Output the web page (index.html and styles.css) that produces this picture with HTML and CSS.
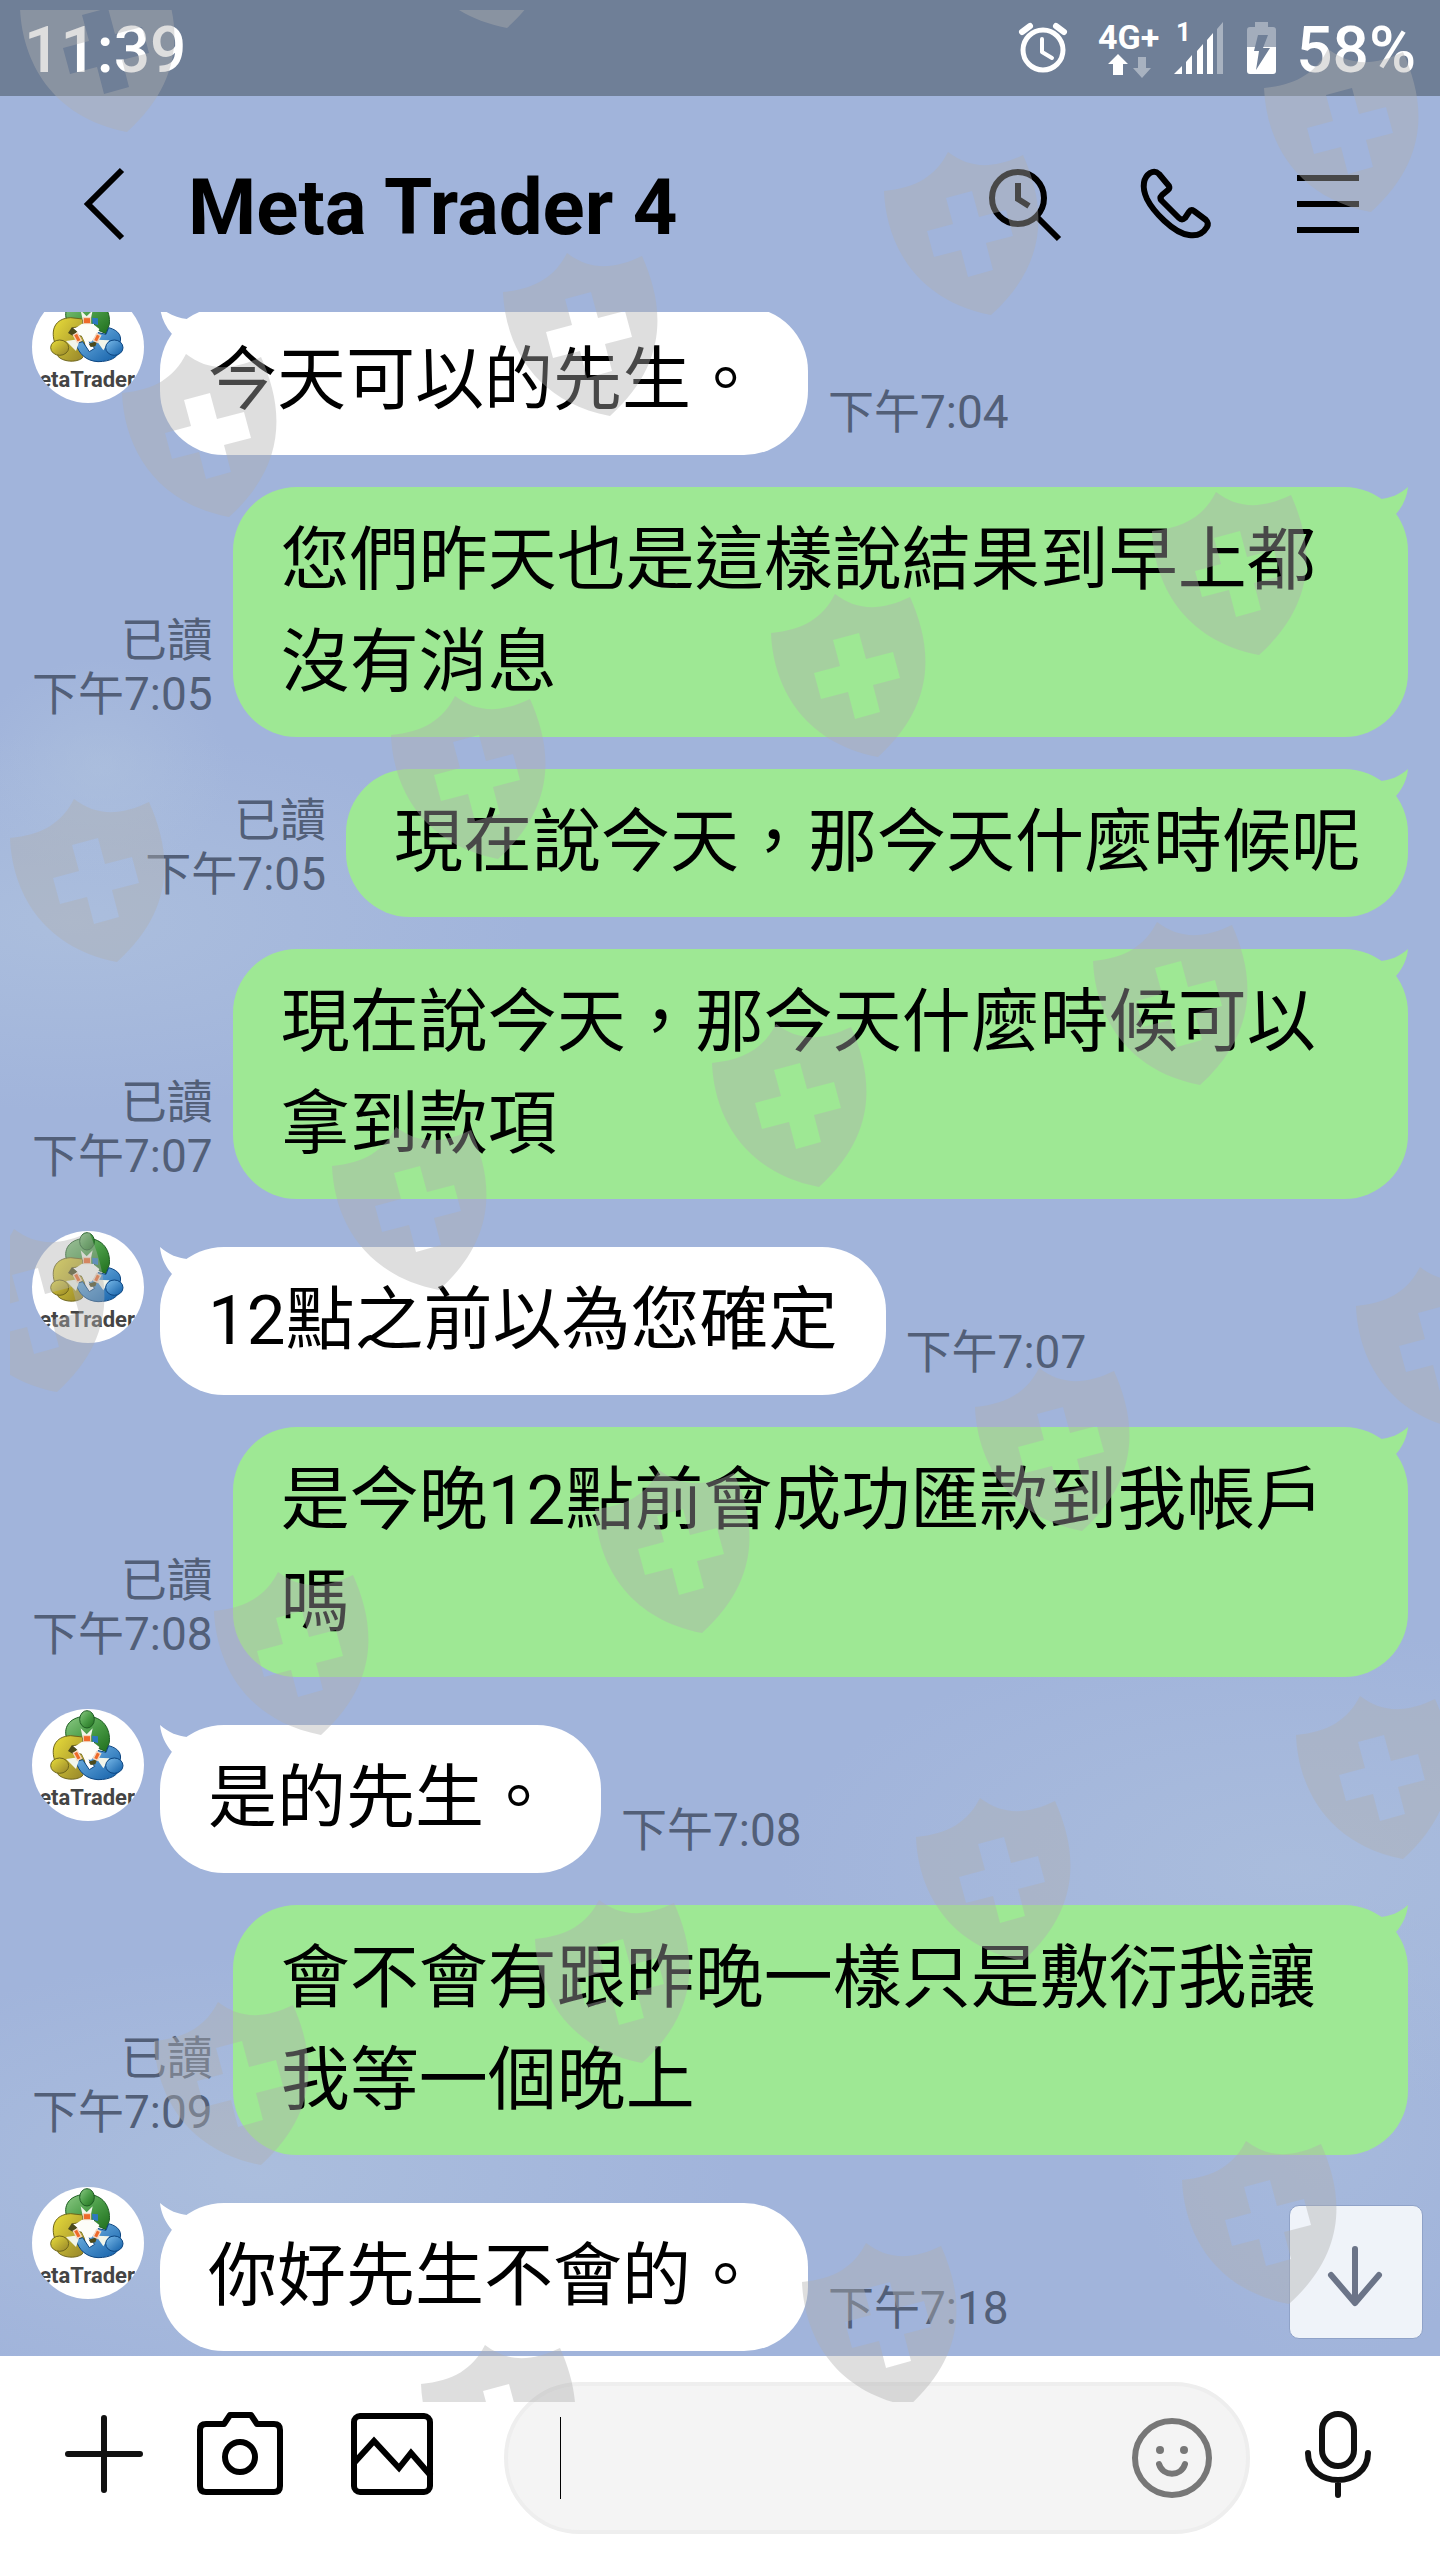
FILE: index.html
```html
<!DOCTYPE html>
<html lang="zh-Hant">
<head>
<meta charset="utf-8">
<meta name="viewport" content="width=device-width, initial-scale=1">
<title>Meta Trader 4</title>
<link rel="stylesheet" href="styles.css">
</head>
<body>
<svg class="defs" aria-hidden="true">
  <defs>
    <linearGradient id="g-green" x1="0" y1="0" x2="1" y2="1"><stop offset="0" stop-color="#8cc985"/><stop offset=".5" stop-color="#4b9d48"/><stop offset="1" stop-color="#1f6e1c"/></linearGradient>
    <linearGradient id="g-yellow" x1="0" y1="0" x2="1" y2="1"><stop offset="0" stop-color="#eade3a"/><stop offset="1" stop-color="#94832a"/></linearGradient>
    <linearGradient id="g-blue" x1="0" y1="0" x2="1" y2="1"><stop offset="0" stop-color="#7cbcea"/><stop offset="1" stop-color="#0f5ca6"/></linearGradient>
    <symbol id="logo" viewBox="0 0 336 336">
      <rect width="336" height="336" fill="#fff"/>
      <g stroke-width="3" stroke-linejoin="round">
        <path d="M104 88C92 50 118 22 164 22C214 22 236 60 232 100L222 128L186 112L190 84L176 108H146L130 84Z" fill="url(#g-green)" stroke="#1d5c22"/>
        <path d="M70 160C54 118 68 82 116 80L152 84V106L122 110L116 128L150 136C164 160 160 188 150 202C130 216 92 212 78 196Z" fill="url(#g-yellow)" stroke="#6f661c"/>
        <path d="M262 160C272 138 262 118 230 110L222 130L186 122C170 126 166 146 172 154L188 172L172 182L152 152L132 158C140 188 162 210 198 212C236 212 256 198 260 184Z" fill="url(#g-blue)" stroke="#0c4580"/>
      </g>
      <path d="M108 126L120 108L136 122L122 134ZM170 158L196 150L190 166L176 168Z" fill="#4b4a1c"/>
      <path d="M132 110L150 98H182L202 114L196 128L178 152H158L142 120Z" fill="#fdfdf8"/>
      <path d="M146 58L164 76L182 58L176 86H152ZM102 150L144 144L132 180ZM192 146L232 148L214 178Z" fill="#f1f5ea"/>
      <path d="M154 80H176V98H154Z" fill="#ee6a2a" stroke="#f6d8c0" stroke-width="3"/>
      <path d="M180 80L198 82V102L182 98Z" fill="#2c78bf"/>
      <path d="M124 132L136 126L148 148L136 154ZM184 148L194 128L206 134L196 154Z" fill="#ee6a2a" stroke="#f6d8c0" stroke-width="4"/>
      <g stroke-width="3">
        <ellipse cx="165" cy="31" rx="22" ry="26" fill="url(#g-green)" stroke="#1d5c22"/>
        <ellipse cx="83" cy="170" rx="27" ry="23" fill="url(#g-yellow)" stroke="#6f661c"/>
        <ellipse cx="247" cy="170" rx="26" ry="23" fill="url(#g-blue)" stroke="#0c4580"/>
      </g>
      <text class="logo-text" x="309" y="288" text-anchor="end">etaTrader</text>
    </symbol>
    <symbol id="shield" viewBox="0 0 160 164">
      <path fill-rule="evenodd" d="M0 39C32 36 52 24 64 0C86 17 110 17 139 3C160 50 168 108 107 163C30 148 2 90 0 39ZM62 46L88 39L95 65L122 58L129 84L102 91L109 118L84 125L77 98L50 105L43 79L69 72Z"/>
    </symbol>
  </defs>
</svg>

<div class="app">
  <div class="status">
    <span class="clock">11:39</span>
    <div class="status-icons">
      <svg width="70" height="96" viewBox="1020 0 70 96" fill="none" stroke="#fff" stroke-width="5" role="img" aria-label="Alarm">
        <circle cx="1045" cy="50" r="20"/><path d="M1044 39v13l10 6" stroke-width="4" stroke-linecap="round" stroke-linejoin="round"/><path d="M1024 32l8-6M1066 32l-8-6" stroke-width="6" stroke-linecap="round"/>
      </svg>
      <svg width="72" height="96" viewBox="1097 0 72 96" fill="#fff">
        <text class="net-text" x="1101" y="49">4G+</text>
        <path d="M1121 54l10 10h-5v11h-10V64h-5z"/><path d="M1145 78l9-10h-5V57h-8v11h-5z" opacity=".4"/>
      </svg>
      <svg width="60" height="96" viewBox="1174 0 60 96" fill="#fff">
        <text class="sim-text" x="1178" y="41">1</text>
        <path d="M1176 74l8-8v8zM1188 62l6-7v19h-6zM1199 51l6-7v30h-6zM1209 40l6-7v41h-6z"/><path d="M1219 29l6-7v52h-6z" opacity=".4"/>
      </svg>
      <svg width="40" height="96" viewBox="1246 0 40 96" role="img" aria-label="Charging">
        <path d="M1257 22h13v5h5q3 0 3 3v17h-29V30q0-3 3-3h5z" fill="#fff" opacity=".36"/>
        <path d="M1249 47h29v24q0 3-3 3h-23q-3 0-3-3z" fill="#fff"/>
        <path d="M1260 35h10l-5 13h7l-14 22 3-19h-5z" fill="#6f7f97"/>
      </svg>
      <span>58%</span>
    </div>
  </div>

  <header class="header">
    <button class="icon-btn" type="button" aria-label="Back"><svg width="96" height="96" fill="none" stroke="#000" stroke-width="6"><path d="M66 14L32 48L66 82"/></svg></button>
    <h1 class="title">Meta Trader 4</h1>
    <nav class="actions">
      <button class="icon-btn" type="button" aria-label="Search"><svg width="96" height="96" fill="none" stroke="#000" stroke-width="6"><circle cx="42" cy="42" r="26"/><path d="M61 61L83 83M42 27V43L53 50"/></svg></button>
      <button class="icon-btn" type="button" aria-label="Call"><svg width="96" height="96" fill="none" stroke="#000" stroke-width="6" stroke-linejoin="round"><path d="M31 18L41 30Q42 32 40 34L34 39Q31 42 34 45L51 62Q54 65 57 62L61 56Q63 53 66 55L78 64Q81 67 79 71Q73 81 61 79C45 77 25 55 19 43C13 30 16 21 22 17Q27 14 31 18Z"/></svg></button>
      <button class="icon-btn" type="button" aria-label="Menu"><svg width="96" height="96" stroke="#000" stroke-width="6"><path d="M17 22H79M17 48H79M17 74H79"/></svg></button>
    </nav>
  </header>

  <main class="chat">
    <div class="row in">
      <svg class="avatar"><use href="#logo"/></svg>
      <p class="bubble">今天可以的先生。</p>
      <div class="meta"><time>下午7:04</time></div>
    </div>
    <div class="row out">
      <div class="meta"><span>已讀</span><time>下午7:05</time></div>
      <p class="bubble">您們昨天也是這樣說結果到早上都沒有消息</p>
    </div>
    <div class="row out">
      <div class="meta"><span>已讀</span><time>下午7:05</time></div>
      <p class="bubble">現在說今天，那今天什麼時候呢</p>
    </div>
    <div class="row out">
      <div class="meta"><span>已讀</span><time>下午7:07</time></div>
      <p class="bubble">現在說今天，那今天什麼時候可以拿到款項</p>
    </div>
    <div class="row in">
      <svg class="avatar"><use href="#logo"/></svg>
      <p class="bubble">12點之前以為您確定</p>
      <div class="meta"><time>下午7:07</time></div>
    </div>
    <div class="row out">
      <div class="meta"><span>已讀</span><time>下午7:08</time></div>
      <p class="bubble">是今晚12點前會成功匯款到我帳戶嗎</p>
    </div>
    <div class="row in">
      <svg class="avatar"><use href="#logo"/></svg>
      <p class="bubble">是的先生。</p>
      <div class="meta"><time>下午7:08</time></div>
    </div>
    <div class="row out">
      <div class="meta"><span>已讀</span><time>下午7:09</time></div>
      <p class="bubble">會不會有跟昨晚一樣只是敷衍我讓我等一個晚上</p>
    </div>
    <div class="row in">
      <svg class="avatar"><use href="#logo"/></svg>
      <p class="bubble">你好先生不會的。</p>
      <div class="meta"><time>下午7:18</time></div>
    </div>
    <button class="to-bottom" type="button" aria-label="Scroll to bottom"><svg width="132" height="132" fill="none" stroke="#6b7488" stroke-width="6" stroke-linecap="round" stroke-linejoin="round"><path d="M65 43V95M41 69L65 97L89 69"/></svg></button>
  </main>

  <form class="composer">
    <div class="tools">
      <button class="icon-btn" type="button" aria-label="More"><svg width="96" height="96" fill="none" stroke="#111" stroke-width="6" stroke-linecap="round"><path d="M12 44H84M48 8V80"/></svg></button>
      <button class="icon-btn" type="button" aria-label="Camera"><svg width="96" height="96" fill="none" stroke="#000" stroke-width="6" stroke-linejoin="round"><path d="M14 14H32L38 5H59L65 14H82Q88 14 88 20V76Q88 82 82 82H14Q8 82 8 76V20Q8 14 14 14Z"/><circle cx="48" cy="47" r="15"/></svg></button>
      <button class="icon-btn" type="button" aria-label="Photos"><svg width="96" height="96" fill="none" stroke="#000" stroke-width="6"><rect x="10" y="6" width="76" height="76" rx="6"/><path d="M10 53L30 31L55 58L67 43L87 66"/></svg></button>
    </div>
    <div class="field">
      <input class="field-input" type="text" aria-label="Message">
      <button class="icon-btn" type="button" aria-label="Stickers"><svg width="96" height="96" fill="none" stroke="#777" stroke-width="6" stroke-linecap="round"><circle cx="48" cy="48" r="37"/><path d="M35 54C39 67 57 67 61 54"/><g fill="#777" stroke="none"><circle cx="36" cy="40" r="4"/><circle cx="60" cy="40" r="4"/></g></svg></button>
    </div>
    <button class="icon-btn" type="button" aria-label="Voice message"><svg width="96" height="96" fill="none" stroke="#111" stroke-width="6" stroke-linecap="round"><rect x="32" y="4" width="32" height="52" rx="16"/><path d="M18 43C18 79 78 79 78 43M48 70V85"/></svg></button>
  </form>

  <svg class="watermark" aria-hidden="true">
    <g transform="translate(-10 -10)">
      <use href="#shield" x="20" y="-31" width="160" height="164"/>
      <use href="#shield" x="400" y="-135" width="160" height="164"/>
      <use href="#shield" x="122" y="354" width="160" height="164"/>
      <use href="#shield" x="503" y="253" width="160" height="164"/>
      <use href="#shield" x="884" y="152" width="160" height="164"/>
      <use href="#shield" x="1264" y="49" width="160" height="164"/>
      <use href="#shield" x="10" y="799" width="160" height="164"/>
      <use href="#shield" x="391" y="696" width="160" height="164"/>
      <use href="#shield" x="771" y="594" width="160" height="164"/>
      <use href="#shield" x="1152" y="492" width="160" height="164"/>
      <use href="#shield" x="-50" y="1229" width="160" height="164"/>
      <use href="#shield" x="332" y="1127" width="160" height="164"/>
      <use href="#shield" x="712" y="1024" width="160" height="164"/>
      <use href="#shield" x="1093" y="922" width="160" height="164"/>
      <use href="#shield" x="214" y="1572" width="160" height="164"/>
      <use href="#shield" x="595" y="1470" width="160" height="164"/>
      <use href="#shield" x="975" y="1368" width="160" height="164"/>
      <use href="#shield" x="1356" y="1267" width="160" height="164"/>
      <use href="#shield" x="154" y="2002" width="160" height="164"/>
      <use href="#shield" x="535" y="1900" width="160" height="164"/>
      <use href="#shield" x="916" y="1798" width="160" height="164"/>
      <use href="#shield" x="1296" y="1696" width="160" height="164"/>
      <use href="#shield" x="421" y="2345" width="160" height="164"/>
      <use href="#shield" x="802" y="2243" width="160" height="164"/>
      <use href="#shield" x="1182" y="2141" width="160" height="164"/>
    </g>
  </svg>
</div>
</body>
</html>
```
FILE: styles.css
```css
* { box-sizing: border-box; }

body {
  margin: 0;
  font-family: Roboto, "Noto Sans CJK TC", sans-serif;
  color: #000;
}

.defs { position: absolute; width: 0; height: 0; }

.app {
  position: relative;
  display: flex;
  flex-direction: column;
  height: 100vh;
  overflow: hidden;
  background:
    radial-gradient(ellipse 130px 110px at 7% 30%, rgba(175, 194, 222, .6), transparent),
    radial-gradient(ellipse 460px 190px at 5% 36%, rgba(175, 194, 222, .7), transparent),
    radial-gradient(ellipse 520px 240px at 90% 73%, rgba(175, 194, 222, .6), transparent),
    radial-gradient(ellipse 480px 220px at 18% 85%, rgba(175, 194, 222, .7), transparent),
    radial-gradient(ellipse 200px 240px at 92% 83%, rgba(175, 194, 222, .4), transparent),
    #a1b4db;
}

.status {
  flex: none;
  display: flex;
  align-items: center;
  justify-content: space-between;
  height: 96px;
  padding: 6px 24px 0;
  background: #6f7f97;
  color: #fff;
  font-size: 64px;
  font-weight: 500;
  line-height: 90px;
}

.status-icons { display: flex; align-items: center; gap: 12px; }
.status-icons svg { flex: none; margin: -6px 0 0; }
.status-icons svg:nth-child(2) { margin: -6px -6px 0; }
.net-text { font-size: 34px; font-weight: 700; }
.sim-text { font-size: 26px; font-weight: 700; }
.logo-text { font-size: 66px; font-weight: 700; fill: #444; }

.header {
  flex: none;
  display: flex;
  align-items: center;
  gap: 36px;
  height: 216px;
  padding: 0 64px 0 56px;
}

.title {
  flex: 1;
  margin: 8px 0 0;
  font-size: 78px;
  font-weight: 700;
  line-height: 96px;
}

.actions { display: flex; gap: 56px; }

.icon-btn {
  flex: none;
  width: 96px;
  height: 96px;
  padding: 0;
  border: 0;
  background: none;
}

.icon-btn svg { display: block; }

.chat {
  position: relative;
  flex: 1;
  min-height: 0;
  display: flex;
  flex-direction: column;
  justify-content: flex-end;
  gap: 32px;
  padding: 0 32px 5px;
  overflow: hidden;
}

.row { flex: none; display: flex; align-items: flex-end; gap: 20px; }
.out { justify-content: flex-end; }

.avatar {
  flex: none;
  align-self: flex-start;
  width: 112px;
  height: 112px;
  margin-right: -4px;
  border-radius: 50%;
}

.bubble {
  position: relative;
  margin: 0;
  padding: 23px 48px;
  border-radius: 64px;
  font-size: 69px;
  line-height: 102px;
}

.in .bubble { margin-top: 16px; background: #fff; }
.out .bubble { background: #9ee894; }

.bubble::before {
  content: "";
  position: absolute;
  top: 0;
  width: 32px;
  height: 32px;
  background: inherit;
  clip-path: path("M0 0C9 8 18 11 27 12L27 27L12 27C5 19 1 10 0 0Z");
}

.in .bubble::before { left: 0; }
.out .bubble::before { right: 0; transform: scaleX(-1); }

.meta {
  flex: none;
  display: flex;
  flex-direction: column;
  padding-bottom: 16px;
  color: #525f78;
  font-size: 46px;
  line-height: 54px;
  text-align: right;
}

.to-bottom {
  position: absolute;
  right: 17px;
  bottom: 17px;
  width: 134px;
  height: 134px;
  padding: 0;
  border: 1px solid #8fa2c8;
  border-radius: 10px;
  background: #eff3f9;
}

.to-bottom svg { display: block; }

.composer {
  flex: none;
  display: flex;
  align-items: center;
  gap: 40px;
  height: 204px;
  padding: 0 54px 0 56px;
  background: #fff;
}

.tools { display: flex; gap: 40px; margin-right: 24px; }
.tools .icon-btn:last-child { margin-left: 16px; }

.field {
  position: relative;
  flex: 1;
  min-width: 0;
  display: flex;
  align-items: center;
  height: 152px;
  padding: 0 26px 0 52px;
  border: 4px solid #eee;
  border-radius: 76px;
  background: #f4f4f4;
}

/* text cursor */
.field::before {
  content: "";
  width: 1px;
  height: 82px;
  background: #000;
}

.field-input {
  flex: 1;
  min-width: 0;
  height: 96px;
  border: 0;
  outline: 0;
  background: none;
  font: inherit;
  font-size: 69px;
}

.watermark {
  position: absolute;
  top: 10px;
  left: 10px;
  width: calc(100% - 10px);
  height: calc(100% - 168px);
  overflow: hidden;
  fill: #b0b0b0;
  opacity: .41;
  pointer-events: none;
}
```
